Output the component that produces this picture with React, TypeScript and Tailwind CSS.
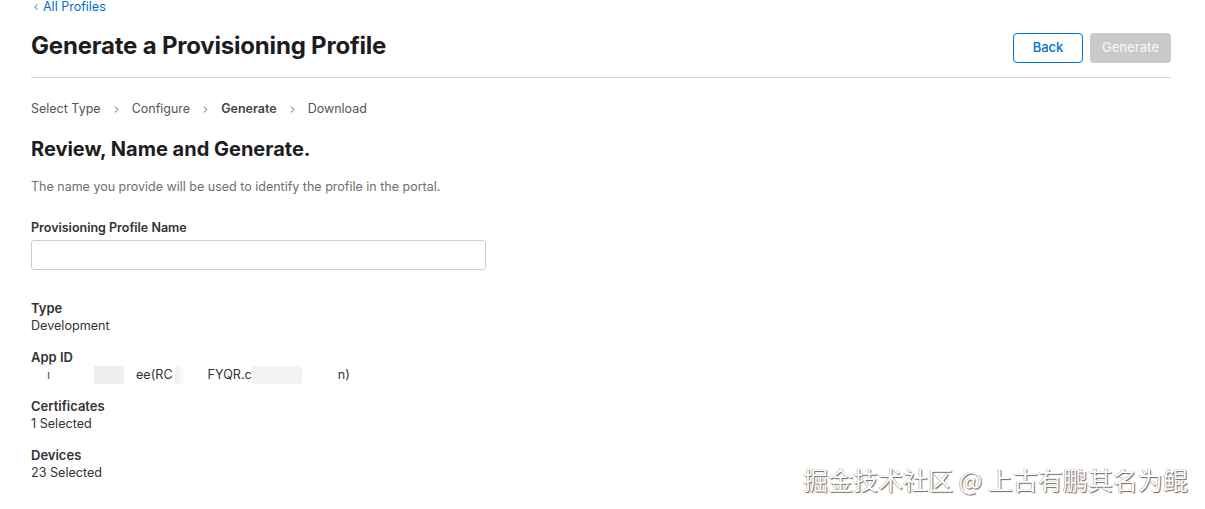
import { ChevronLeft, ChevronRight } from 'lucide-react';

const steps = ['Select Type', 'Configure', 'Generate', 'Download'];

const details = [
  { label: 'Type', value: 'Development' },
  { label: 'Certificates', value: '1 Selected' },
  { label: 'Devices', value: '23 Selected' },
];

function Field({ label, children }: { label: string; children: React.ReactNode }) {
  return (
    <div className="flex flex-col">
      <div className="text-[13px] leading-[18px] font-semibold text-[#333]">{label}</div>
      <div className="text-[12.6px] leading-[18px] text-[#333]">{children}</div>
    </div>
  );
}

export default function App() {
  return (
    <div
      className="relative h-[509px] w-[1205px] overflow-hidden bg-white"
      style={{ fontFamily: 'Inter, "Noto Sans", sans-serif' }}
    >
      <div className="flex w-[1140px] flex-col pl-[31px] box-content">
        {/* Top bar */}
        <a className="flex items-center gap-[2px] text-[12.5px] leading-[13px] text-[#0070c9]">
          <ChevronLeft size={10} strokeWidth={2.2} />
          <span>All Profiles</span>
        </a>

        <div className="mt-[15px] flex items-start justify-between border-b border-[#d6d6d6] pb-[14px]">
          <h1 className="mt-[3px] text-[24px] font-bold leading-[30px] tracking-[-0.2px] text-[#1d1d1f]">
            Generate a Provisioning Profile
          </h1>
          <div className="mt-[5px] flex gap-[7px]">
            <button className="h-[30px] w-[70px] rounded-[4px] border border-[#0070c9] text-[13px] font-medium text-[#0070c9]">
              Back
            </button>
            <button className="h-[30px] w-[81px] rounded-[4px] bg-[#c9c9c9] text-[13px] font-medium text-[#f4f4f4]">
              Generate
            </button>
          </div>
        </div>

        {/* Steps */}
        <div className="mt-[23px] flex items-center text-[12.5px] leading-[16px] text-[#555]">
          {steps.map((s, i) => (
            <div key={s} className="flex items-center">
              <span className={s === 'Generate' ? 'font-semibold text-[#444]' : ''}>{s}</span>
              {i < steps.length - 1 && (
                <ChevronRight size={11} strokeWidth={2} className="mx-[10px] text-[#555]" />
              )}
            </div>
          ))}
        </div>

        <h2 className="mt-[20px] text-[20px] font-bold leading-[24px] text-[#1d1d1f]">
          Review, Name and Generate.
        </h2>

        <p className="mt-[18px] text-[12.5px] leading-[16px] text-[#6e6e73]">
          The name you provide will be used to identify the profile in the portal.
        </p>

        <label className="mt-[25px] text-[12.5px] font-semibold leading-[16px] text-[#333]">
          Provisioning Profile Name
        </label>
        <input
          className="mt-[4px] h-[30px] w-[455px] rounded-[3px] border border-[#cfcfcf] outline-none"
          type="text"
        />

        {/* Details */}
        <div className="mt-[29px] flex flex-col gap-[13px]">
          <Field label={details[0].label}>{details[0].value}</Field>
          <Field label="App ID">
            <div className="flex h-[18px] items-center">
              <span className="ml-[16px] w-[47px] text-[#555]">ı</span>
              <span className="h-[18px] w-[30px] bg-[#efefef]" />
              <span className="ml-[12px]">ee(RC</span>
              <span className="ml-[2px] h-[18px] w-[10px] bg-gradient-to-r from-[#eeeeee] to-white" />
              <span className="ml-[23px]">FYQR.c</span>
              <span className="h-[18px] w-[50px] rounded-[2px] bg-[#f3f3f3]" />
              <span className="ml-[36px]">n)</span>
            </div>
          </Field>
          <Field label={details[1].label}>{details[1].value}</Field>
          <Field label={details[2].label}>{details[2].value}</Field>
        </div>
      </div>

      {/* Watermark */}
      <div
        className="absolute left-[803px] top-[463px] whitespace-nowrap text-[25px] leading-[32px] text-white"
        style={{
          fontFamily: '"Noto Sans CJK SC", sans-serif',
          textShadow: '1px 1px 1px #666, -0.5px -0.5px 0.5px #999',
        }}
      >
        掘金技术社区 @ 上古有鹏其名为鲲
      </div>
    </div>
  );
}
